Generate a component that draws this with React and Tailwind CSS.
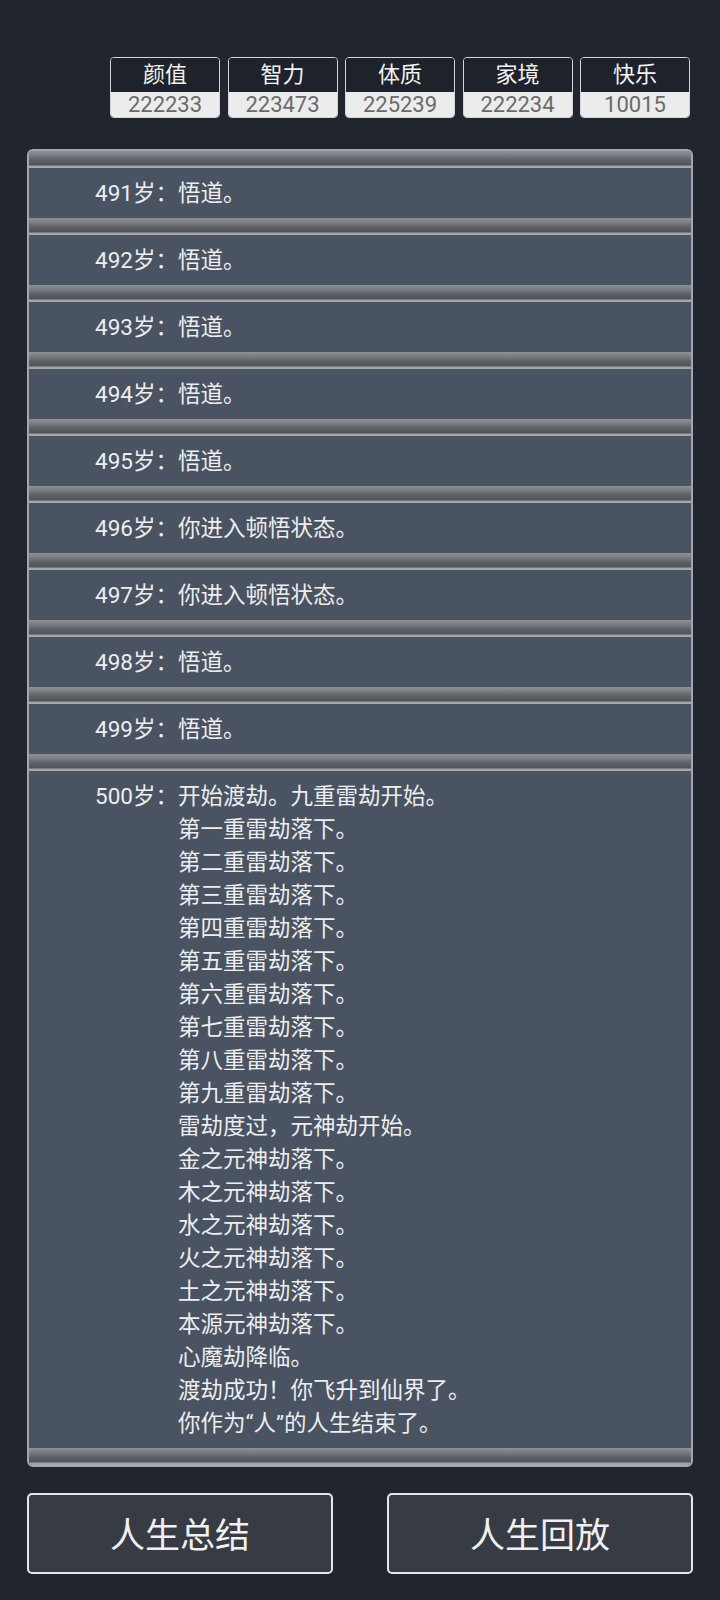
const FONT = { fontFamily: 'Roboto, "Noto Sans CJK SC", sans-serif' }

const STATS = [
  { name: '颜值', value: 222233 },
  { name: '智力', value: 223473 },
  { name: '体质', value: 225239 },
  { name: '家境', value: 222234 },
  { name: '快乐', value: 10015 },
]

const LOG = [
  { age: 491, lines: ['悟道。'] },
  { age: 492, lines: ['悟道。'] },
  { age: 493, lines: ['悟道。'] },
  { age: 494, lines: ['悟道。'] },
  { age: 495, lines: ['悟道。'] },
  { age: 496, lines: ['你进入顿悟状态。'] },
  { age: 497, lines: ['你进入顿悟状态。'] },
  { age: 498, lines: ['悟道。'] },
  { age: 499, lines: ['悟道。'] },
  {
    age: 500,
    lines: [
      '开始渡劫。九重雷劫开始。',
      '第一重雷劫落下。',
      '第二重雷劫落下。',
      '第三重雷劫落下。',
      '第四重雷劫落下。',
      '第五重雷劫落下。',
      '第六重雷劫落下。',
      '第七重雷劫落下。',
      '第八重雷劫落下。',
      '第九重雷劫落下。',
      '雷劫度过，元神劫开始。',
      '金之元神劫落下。',
      '木之元神劫落下。',
      '水之元神劫落下。',
      '火之元神劫落下。',
      '土之元神劫落下。',
      '本源元神劫落下。',
      '心魔劫降临。',
      '渡劫成功！你飞升到仙界了。',
      '你作为“人”的人生结束了。',
    ],
  },
]

function Separator() {
  return (
    <div className="h-[17px] bg-[linear-gradient(to_bottom,#8e9196_0%,#7a7d82_25%,#5c6065_55%,#51555a_80%,#a6a9ae_92%,#a6a9ae_100%)]" />
  )
}

function StatBox({ name, value }) {
  return (
    <div className="w-[110px] h-[61px] rounded-[4px] border border-[#d4d6d9] overflow-hidden flex flex-col">
      <div className="h-[34px] bg-[#1e222a] text-[#f2f2f2] text-[22px] leading-[34px] text-center">
        {name}
      </div>
      <div className="flex-1 bg-[#ececec] text-[#6a6a6a] text-[22px] leading-[25px] text-center">
        {value}
      </div>
    </div>
  )
}

export default function App() {
  return (
    <div className="min-h-[1600px] bg-[#21252d] px-[27px] pt-[57px]" style={FONT}>
      {/* attribute summary */}
      <div className="flex justify-end gap-[7.5px] pr-[3px]">
        {STATS.map(s => (
          <StatBox key={s.name} {...s} />
        ))}
      </div>

      {/* life log */}
      <div className="mt-[31px] border-2 border-[#a3a6ab] rounded-[6px] overflow-hidden bg-[#4a5361]">
        <Separator />
        {LOG.map(entry => (
          <div key={entry.age}>
            <div className="flex pl-[66px] py-[8.5px] text-[22.5px] leading-[33px] text-[#eceef0]">
              <span className="w-[83px] shrink-0">{entry.age}岁：</span>
              <div>
                {entry.lines.map((line, i) => (
                  <div key={i}>{line}</div>
                ))}
              </div>
            </div>
            <Separator />
          </div>
        ))}
      </div>

      {/* actions */}
      <div className="mt-[26px] flex justify-between">
        <button className="w-[306px] h-[81px] pt-[8px] rounded-[5px] border-2 border-[#e4e6e9] bg-[#373b44] text-[35px] text-[#f0f0f0]">
          人生总结
        </button>
        <button className="w-[306px] h-[81px] pt-[8px] rounded-[5px] border-2 border-[#e4e6e9] bg-[#373b44] text-[35px] text-[#f0f0f0]">
          人生回放
        </button>
      </div>
    </div>
  )
}
